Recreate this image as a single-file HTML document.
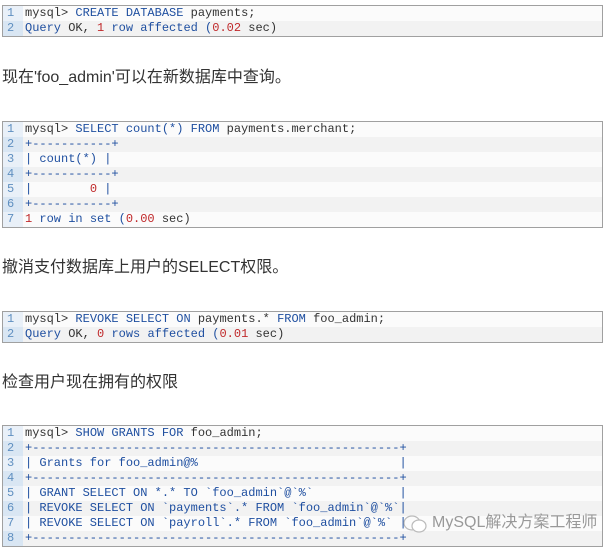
<!DOCTYPE html>
<html><head><meta charset="utf-8"><style>
body{margin:0;width:605px;height:549px;background:#fff;position:relative;overflow:hidden;font-family:"Liberation Sans","Noto Sans CJK SC",sans-serif}
.box{position:absolute;left:2px;width:599px;border:1px solid #a0a0a0;font-family:"Liberation Mono",monospace;font-size:12px;}
.r{height:15px;line-height:15px;background:#fbfbfb;white-space:pre;color:#333;position:relative}
.r:nth-child(even){background:#f2f2f2}
.n{display:inline-block;width:20px;padding-left:4px;box-sizing:border-box;background:#e9f0f8;color:#5f8fc0;margin-right:2px}
.r:nth-child(even) .n{background:#d9e6f3}
.k{color:#1f4fa0}.d{color:#c0292b}
.p{position:absolute;left:2px;font-size:16px;color:#333;line-height:20px}
</style></head><body>
<div class="box" style="top:5px">
<div class="r"><span class="n">1</span>mysql&gt; <span class="k">CREATE DATABASE</span> payments;</div>
<div class="r"><span class="n">2</span><span class="k">Query</span> OK, <span class="d">1</span> <span class="k">row affected (</span><span class="d">0.02</span> sec)</div>
</div>
<div class="p" style="top:68px">现在'foo_admin'可以在新数据库中查询。</div>
<div class="box" style="top:121px">
<div class="r"><span class="n">1</span>mysql&gt; <span class="k">SELECT count(*) FROM</span> payments.merchant;</div>
<div class="r"><span class="n">2</span><span class="k">+-----------+</span></div>
<div class="r"><span class="n">3</span><span class="k">| count(*) |</span></div>
<div class="r"><span class="n">4</span><span class="k">+-----------+</span></div>
<div class="r"><span class="n">5</span><span class="k">|        </span><span class="d">0</span><span class="k"> |</span></div>
<div class="r"><span class="n">6</span><span class="k">+-----------+</span></div>
<div class="r"><span class="n">7</span><span class="d">1</span> <span class="k">row in set (</span><span class="d">0.00</span> sec)</div>
</div>
<div class="p" style="top:258px">撤消支付数据库上用户的SELECT权限。</div>
<div class="box" style="top:311px">
<div class="r"><span class="n">1</span>mysql&gt; <span class="k">REVOKE SELECT ON</span> payments.* <span class="k">FROM</span> foo_admin;</div>
<div class="r"><span class="n">2</span><span class="k">Query</span> OK, <span class="d">0</span> <span class="k">rows affected (</span><span class="d">0.01</span> sec)</div>
</div>
<div class="p" style="top:373px">检查用户现在拥有的权限</div>
<div class="box" style="top:425px">
<div class="r"><span class="n">1</span>mysql&gt; <span class="k">SHOW GRANTS FOR</span> foo_admin;</div>
<div class="r"><span class="n">2</span><span class="k">+---------------------------------------------------+</span></div>
<div class="r"><span class="n">3</span><span class="k">| Grants for foo_admin@%                            |</span></div>
<div class="r"><span class="n">4</span><span class="k">+---------------------------------------------------+</span></div>
<div class="r"><span class="n">5</span><span class="k">| GRANT SELECT ON *.* TO `foo_admin`@`%`            |</span></div>
<div class="r"><span class="n">6</span><span class="k">| REVOKE SELECT ON `payments`.* FROM `foo_admin`@`%`|</span></div>
<div class="r"><span class="n">7</span><span class="k">| REVOKE SELECT ON `payroll`.* FROM `foo_admin`@`%` |</span></div>
<div class="r"><span class="n">8</span><span class="k">+---------------------------------------------------+</span></div>
</div>
<svg style="position:absolute;left:402px;top:514px" width="26" height="20" viewBox="0 0 26 20"><ellipse cx="10" cy="9" rx="8" ry="7" fill="none" stroke="#bbb" stroke-width="1.2"/><ellipse cx="17" cy="12" rx="7" ry="6" fill="#fff" stroke="#bbb" stroke-width="1.2"/></svg>
<div style="position:absolute;left:432px;top:513px;font-size:16px;color:#999;line-height:20px">MySQL解决方案工程师</div>
</body></html>
